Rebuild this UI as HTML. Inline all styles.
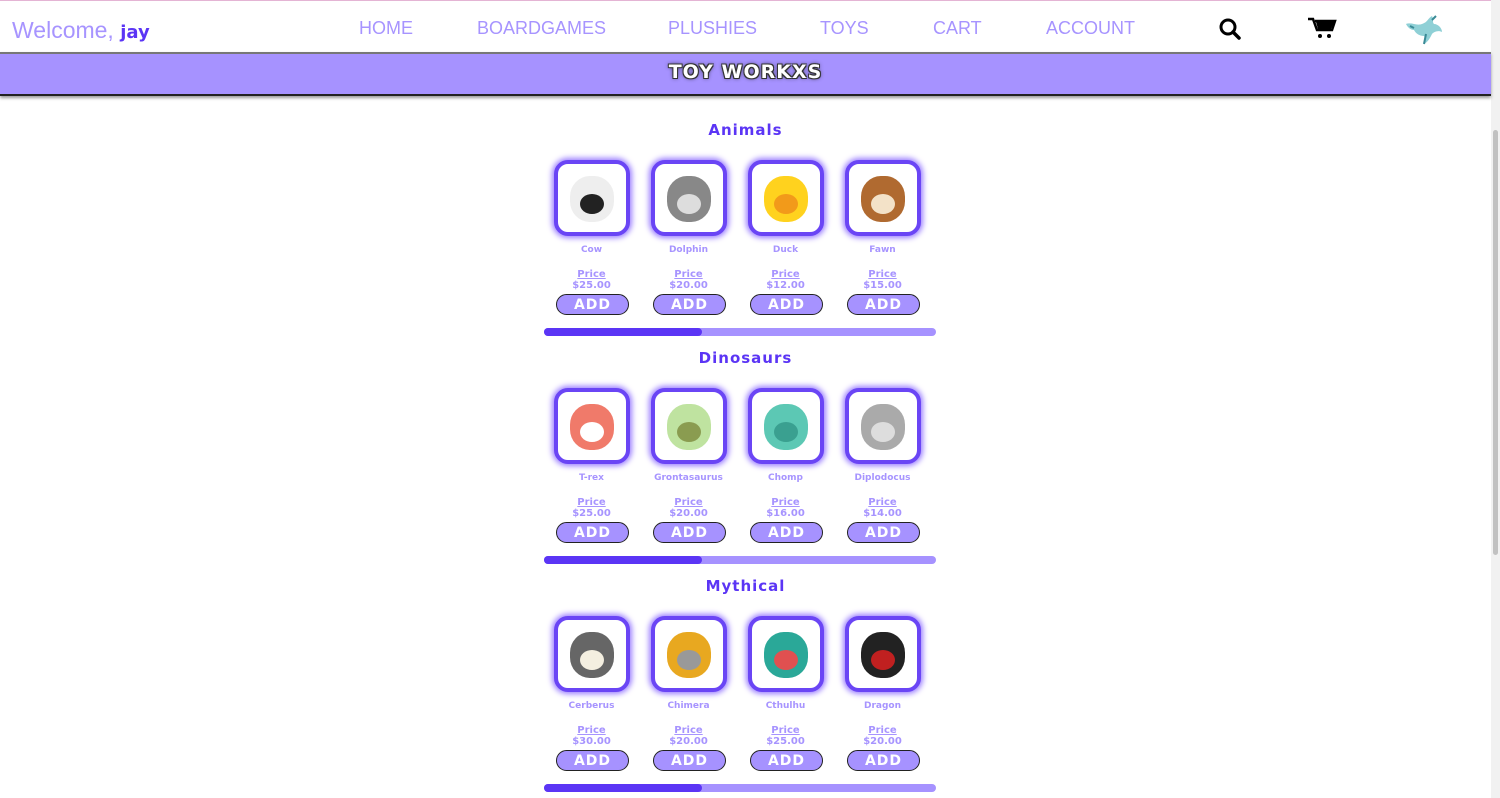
<!DOCTYPE html>
<html><head><meta charset="utf-8"><style>
*{margin:0;padding:0;box-sizing:border-box}
body{width:1500px;height:798px;overflow:hidden;background:#fff;position:relative;font-family:"Liberation Sans",sans-serif}
.topline{position:absolute;left:0;top:0;width:1500px;height:1px;background:#e4b4d4}
.sb{position:absolute;left:1491px;top:0;width:9px;height:798px;background:#f1f1f1}
.sb i{position:absolute;left:2px;top:130px;width:5px;height:425px;background:#c1c1c1;border-radius:3px}
.welcome{position:absolute;left:12px;top:17px;font-size:23px;color:#a794ff}
.welcome b{font-family:"DejaVu Sans",sans-serif;font-weight:bold;color:#5b35f5;font-size:18px}
.nav{position:absolute;top:18px;font-size:18px;color:#a794ff}
.banner{position:absolute;left:0;top:52px;width:1491px;height:44px;background:#a692ff;border-top:2px solid #777;border-bottom:2px solid #222;box-shadow:0 2px 3px #999}
.title{position:absolute;left:0;width:1491px;top:61px;text-align:center;font-family:"DejaVu Sans",sans-serif;font-weight:bold;font-size:19px;color:#fff;letter-spacing:1px;text-shadow:-1px -1px 0 #333,1px -1px 0 #333,-1px 1px 0 #333,1px 1px 0 #333,0 0 4px #222}
.sec{position:absolute;left:0;width:1491px;text-align:center;font-family:"DejaVu Sans",sans-serif;font-weight:bold;font-size:15px;color:#5b35f5;letter-spacing:1px}
.card{position:absolute;width:76px;height:76px;border:4px solid #6a45f5;border-radius:14px;background:#fff;box-shadow:0 0 6px 2px #9a7dff;overflow:hidden}
.card div{position:absolute}
.nm{position:absolute;width:97px;text-align:center;font-family:"DejaVu Sans",sans-serif;font-weight:bold;font-size:9px;color:#a794ff}
.pr{position:absolute;width:97px;text-align:center;font-family:"DejaVu Sans",sans-serif;font-weight:bold;font-size:10px;line-height:11px;color:#a794ff}
.add{position:absolute;width:73px;height:21px;background:#a692ff;border:1px solid #222;border-radius:11px;color:#fff;font-family:"DejaVu Sans",sans-serif;font-weight:bold;font-size:14px;text-align:center;line-height:20px;letter-spacing:1px}
.bar{position:absolute;left:544px;width:392px;height:8px;border-radius:4px;background:#a692ff}
.bar i{position:absolute;left:0;top:0;width:158px;height:8px;border-radius:4px;background:#5b35f5}
</style></head><body>
<div class="topline"></div>
<div class="welcome">Welcome, <b>jay</b></div>
<div class="nav" style="left:359px">HOME</div>
<div class="nav" style="left:477px">BOARDGAMES</div>
<div class="nav" style="left:668px">PLUSHIES</div>
<div class="nav" style="left:820px">TOYS</div>
<div class="nav" style="left:933px">CART</div>
<div class="nav" style="left:1046px">ACCOUNT</div>
<svg style="position:absolute;left:1218px;top:17px" width="24" height="24" viewBox="0 0 24 24"><circle cx="10" cy="10" r="7" fill="none" stroke="#000" stroke-width="3"/><path d="M15 15l6 6" stroke="#000" stroke-width="3.5" stroke-linecap="round"/></svg>
<svg style="position:absolute;left:1307px;top:17px" width="30" height="22" viewBox="0 0 30 22"><path d="M1 2h5l4 11h15l3-9H8" fill="none" stroke="#000" stroke-width="2.5"/><path d="M9 5h18l-3 7H11z" fill="#000"/><circle cx="13" cy="19" r="2" fill="#000"/><circle cx="22" cy="19" r="2" fill="#000"/></svg>
<svg style="position:absolute;left:1402px;top:12px" width="44" height="34" viewBox="0 0 44 34"><path d="M4 12c6-2 10 2 16 0s6-6 10-8c2 4 0 6 2 8 4 0 8 4 8 8-4-2-8 0-10 2-2 4-4 8-8 10 0-4 2-6 0-8-4 0-8-2-10-6-3 0-6-2-8-6z" fill="#8fd0d6"/><path d="M8 14l4 2M30 8l4-4M24 22l-2 10" stroke="#3a8a96" stroke-width="2"/></svg>
<div class="sb"><i></i></div>
<div class="banner"></div>
<div class="title">TOY WORKXS</div>
<div id="c"></div>
<script>
var secs=[["Animals",[["Cow","$25.00","#eee","#222"],["Dolphin","$20.00","#888","#ddd"],["Duck","$12.00","#ffd21e","#f29a1a"],["Fawn","$15.00","#b06a30","#f3e2c8"]]],
["Dinosaurs",[["T-rex","$25.00","#f07a6a","#fff"],["Grontasaurus","$20.00","#bfe3a0","#8a9c50"],["Chomp","$16.00","#5cc8b4","#3aa090"],["Diplodocus","$14.00","#aaa","#ddd"]]],
["Mythical",[["Cerberus","$30.00","#666","#f4efe0"],["Chimera","$20.00","#e8a820","#999"],["Cthulhu","$25.00","#2aa898","#e05050"],["Dragon","$20.00","#222","#c02020"]]]];
var h="";
secs.forEach(function(s,si){var o=si*228;
h+='<div class="sec" style="top:'+(121+o)+'px">'+s[0]+'</div>';
s[1].forEach(function(p,i){var x=554+i*97;
h+='<div class="card" style="left:'+x+'px;top:'+(160+o)+'px"><div style="left:12px;top:12px;width:44px;height:46px;border-radius:45%;background:'+p[2]+'"></div><div style="left:22px;top:30px;width:24px;height:20px;border-radius:50%;background:'+p[3]+'"></div></div>';
h+='<div class="nm" style="left:'+(x-11)+'px;top:'+(245+o)+'px">'+p[0]+'</div>';
h+='<div class="pr" style="left:'+(x-11)+'px;top:'+(269+o)+'px"><u>Price</u><br>'+p[1]+'</div>';
h+='<div class="add" style="left:'+(x+2)+'px;top:'+(294+o)+'px">ADD</div>';});
h+='<div class="bar" style="top:'+(328+o)+'px"><i></i></div>';});
document.getElementById("c").innerHTML=h;
</script>
</body></html>
